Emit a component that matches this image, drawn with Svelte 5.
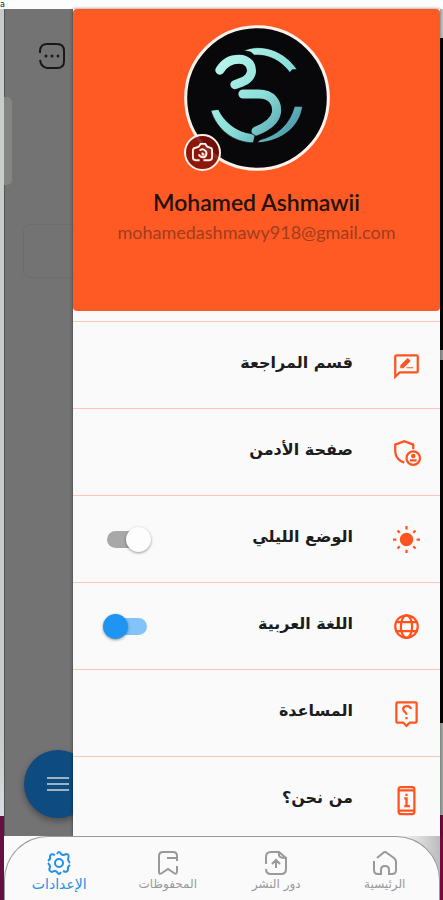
<script lang="ts">
	let nightMode = $state(false);
	let arabic = $state(true);
	let activeTab = $state('settings');

	const tabs = [
		{ id: 'home', label: 'الرئيسية' },
		{ id: 'publish', label: 'دور النشر' },
		{ id: 'saved', label: 'المحفوظات' },
		{ id: 'settings', label: 'الإعدادات' }
	];
</script>

<div class="desktop" dir="rtl">
	<div class="topbar"><span aria-hidden="true">a</span></div>
	<div class="phone">
		<div class="stage">
			<aside class="drawer">
				<header class="profile">
					<div class="avatar">
						<svg class="avatar-art" viewBox="40 46 436 436" aria-hidden="true">
							<defs>
								<linearGradient id="teal" gradientUnits="userSpaceOnUse" x1="150" y1="160" x2="390" y2="370">
									<stop offset="0" stop-color="#b4f4ea" />
									<stop offset="0.5" stop-color="#8bded8" />
									<stop offset="1" stop-color="#438fa3" />
								</linearGradient>
							</defs>
							<circle cx="258" cy="264" r="213" fill="#08080b" stroke="#fff1ec" stroke-width="9" />
							<g fill="none" stroke="url(#teal)" stroke-width="27">
								<path stroke-linecap="round" d="M147 181C160 159 180 148 204 148C231 148 244 167 241 188C236 211 212 216 192 224" />
								<path stroke-linecap="round" d="M216 252H263C302 252 320 278 316 308C311 336 282 352 255 363" />
							</g>
							<g fill="url(#teal)">
								<path d="M218 122C272 101 336 119 378 179L363 180L356 188C328 151 292 134 250 136L239 127Z" />
								<path d="M120 301L143 298C160 335 195 364 243 371L252 376L247 398C188 397 138 359 120 301Z" />
								<path d="M370 289H394C388 344 338 394 258 398L267 389C318 376 356 343 370 289Z" />
							</g>
						</svg>
						<button class="camera" aria-label="Change photo">
							<svg viewBox="0 0 24 24" aria-hidden="true">
								<path d="M9 20H5C3 20 2 19 2 17V10C2 8 3 7 5 7L8 6L10 3H15L17 6L20 7C21 7 22 8 22 10V17C22 19 21 20 19 20H13M9 10C12 7 17 10 16 14C15 18 10 18 8 14M12 12L12 14H14" />
							</svg>
						</button>
					</div>
					<h1>Mohamed Ashmawii</h1>
					<p>mohamedashmawy918@gmail.com</p>
				</header>

				<div class="menu">
					<button class="row">
						<svg viewBox="0 0 24 24" aria-hidden="true">
							<path d="M2 22V4Q2 3 3 3H21Q22 3 22 4V17Q22 18 21 18H6Z" />
							<path d="M7 14V12L13 6L15 8L9 14ZM12 14H18" fill="currentColor" stroke-width="1" />
						</svg>
						<span>قسم المراجعة</span>
					</button>
					<button class="row">
						<svg viewBox="0 0 24 24" aria-hidden="true">
							<path d="M18 9V5L10 2L2 5V11C2 16 6 20 10 21" />
							<circle cx="18" cy="17" r="6" />
							<circle cx="18" cy="15" r="2" fill="currentColor" stroke="none" />
							<path d="M15 19H21" stroke-width="2" />
						</svg>
						<span>صفحة الأدمن</span>
					</button>
					<label class="row">
						<svg viewBox="0 0 24 24" aria-hidden="true">
							<circle cx="12" cy="12" r="5" fill="currentColor" />
							<path d="M12 0V3M12 21V24M0 12H3M21 12H24M4 4L6 6M18 18L20 20M4 20L6 18M18 6L20 4" />
						</svg>
						<span>الوضع الليلي</span>
						<input type="checkbox" role="switch" bind:checked={nightMode} />
					</label>
					<label class="row">
						<svg viewBox="0 0 24 24" aria-hidden="true">
							<circle cx="12" cy="12" r="10" />
							<ellipse cx="12" cy="12" rx="5" ry="10" />
							<path d="M2 8H22M2 16H22" />
						</svg>
						<span>اللغة العربية</span>
						<input type="checkbox" role="switch" bind:checked={arabic} />
					</label>
					<button class="row">
						<svg viewBox="0 0 24 24" aria-hidden="true">
							<path d="M4 2H20Q21 2 21 3V19Q21 20 20 20H15L12 23L9 20H4Q3 20 3 19V3Q3 2 4 2Z" />
							<path d="M16 8C15 4 9 5 9 8C9 11 12 10 12 13M12 15V17" />
						</svg>
						<span>المساعدة</span>
					</button>
					<button class="row">
						<svg viewBox="0 0 24 24" aria-hidden="true">
							<rect x="5" y="0" width="14" height="24" rx="2" />
							<path d="M5 3H19M5 21H19M10 10H12V17M10 17H15" />
							<path d="M11 7H13" />
						</svg>
						<span>من نحن؟</span>
					</button>
				</div>
			</aside>

			<div class="behind">
				<button class="more" aria-label="More">
					<svg viewBox="0 0 26 26" aria-hidden="true">
						<path d="M1 10V7Q2 1 8 1H18Q25 1 25 8V18Q25 25 18 25H8Q2 24 1 17" />
						<path d="M7 13H7M13 13H13M19 13H19" stroke-width="3" stroke-linecap="round" />
					</svg>
				</button>
				<div class="side-tab"></div>
				<div class="ghost-card"></div>
				<button class="fab" aria-label="Menu">
					<svg viewBox="0 0 24 18" aria-hidden="true"><path d="M1 3H23M1 9H23M1 15H23" /></svg>
				</button>
			</div>
		</div>

		<div class="nav-wrap">
			<nav>
				{#each tabs as tab (tab.id)}
					<button class="tab" class:active={activeTab === tab.id} onclick={() => (activeTab = tab.id)}>
						<svg viewBox="0 0 26 26" aria-hidden="true">
							{#if tab.id === 'home'}
								<path d="M5 8L11 3Q13 1 15 3L22 8Q24 10 24 12V20Q24 24 20 24H17V20Q17 16 13 16Q9 16 9 20V24H6Q2 24 2 20V11" />
							{:else if tab.id === 'publish'}
								<path d="M3 14V7Q3 2 8 2H16L23 8V19Q23 24 18 24H8Q3 24 3 19M16 2V5Q16 8 23 8M13 18V11M9 14L13 10L17 14" />
							{:else if tab.id === 'saved'}
								<path d="M22 11V6Q22 2 18 2H8Q4 2 4 6V22Q4 25 7 23L13 19L19 23Q22 25 22 21V16M12 8H22" />
							{:else}
								<circle cx="13" cy="13" r="4" />
								<path d="M11 4Q13 0 15 4Q17 6 20 4Q24 4 22 9Q22 11 24 13M24 15Q21 17 22 20Q21 23 17 21M15 22Q13 26 11 22Q9 20 6 22Q2 21 4 17Q4 15 2 13M2 11Q5 9 4 6Q5 3 9 5" />
							{/if}
						</svg>
						<span>{tab.label}</span>
					</button>
				{/each}
			</nav>
		</div>
	</div>
</div>

<style>
	:global(body) {
		background: #fdfdfd;
	}

	.desktop {
		display: flex;
		flex-direction: column;
		min-height: 100vh;
		font-family: 'DejaVu Sans', sans-serif;
		background:
			linear-gradient(#bfc3c1 38px, #050505 38px, #050505 350px, #999 350px, #999 360px, #050505 360px, #050505 723px, #a3aaa5 723px, #a3aaa5 815px, #700b3e 815px) right / 3px 100% no-repeat,
			linear-gradient(#c8cdca 740px, #d9dce2 816px, #670f42 816px) left / 4px 100% no-repeat,
			#fdfdfd;
	}

	.topbar {
		height: 9px;
		background: #fdfdfd;
		direction: ltr;
		font-size: 8px;
		line-height: 9px;
		color: #222;
	}

	.topbar span {
		display: block;
	}

	.phone {
		flex: 1;
		display: flex;
		flex-direction: column;
		margin: 0 3px 0 4px;
		background: #fafafa;
	}

	.stage {
		flex: 1;
		display: flex;
	}

	.drawer {
		flex: 1;
		background: #fafafa;
		z-index: 1;
		box-shadow: 0 0 3px rgba(0, 0, 0, 0.5);
	}

	.profile {
		display: flex;
		flex-direction: column;
		align-items: center;
		box-sizing: border-box;
		height: 302px;
		padding-top: 16px;
		background: #ff5a24;
		border-radius: 4px;
		font-family: Lato, sans-serif;
		direction: ltr;
	}

	.avatar {
		position: relative;
		width: 146px;
		height: 146px;
	}

	.avatar-art {
		display: block;
		width: 100%;
		height: 100%;
	}

	.camera {
		position: absolute;
		left: 0;
		bottom: 0;
		display: flex;
		align-items: center;
		justify-content: center;
		width: 37px;
		height: 37px;
		padding: 0;
		border: 2px solid #fff1ec;
		border-radius: 50%;
		background: rgba(125, 14, 8, 0.88);
		color: #fff1ec;
	}

	.camera svg {
		width: 23px;
		height: 23px;
	}

	h1 {
		margin: 16px 0 0;
		font-size: 23px;
		line-height: 30px;
		font-weight: 600;
		color: #25120c;
	}

	.profile p {
		margin: 2px 0 0;
		font-size: 18px;
		line-height: 26px;
		color: #9f3d1e;
	}

	.menu {
		padding-top: 10px;
	}

	.row {
		display: flex;
		align-items: center;
		box-sizing: border-box;
		width: 100%;
		height: 87px;
		padding: 0 20px 0 30px;
		border: 0;
		border-top: 1px solid #ffc6b4;
		background: none;
		color: #ff5420;
		font-family: inherit;
		text-align: start;
		cursor: pointer;
	}

	.row:last-child {
		height: 79px;
		padding-top: 8px;
	}

	.row span {
		flex: 1;
		margin-right: 40px;
		padding-bottom: 4px;
		font-size: 16px;
		line-height: 26px;
		font-weight: 700;
		color: #1c1c1c;
	}

	svg {
		fill: none;
		stroke: currentColor;
		stroke-width: 2;
		flex: none;
	}

	.row svg {
		width: 27px;
		height: 27px;
		overflow: visible;
	}

	.row input {
		appearance: none;
		display: flex;
		align-items: center;
		width: 40px;
		height: 17px;
		margin: 0 0 0 4px;
		border-radius: 9px;
		background: #a8a8a8;
		cursor: pointer;
	}

	.row input::before {
		content: '';
		flex: none;
		width: 25px;
		height: 25px;
		margin-right: -4px;
		border-radius: 50%;
		background: #fdfdfd;
		box-shadow: 0 1px 3px rgba(0, 0, 0, 0.4);
	}

	.row input:checked {
		background: #82c3fa;
	}

	.row input:checked::before {
		margin-right: 19px;
		background: #2094f3;
	}

	.behind {
		position: relative;
		display: flex;
		flex-direction: column;
		align-items: flex-start;
		flex: 0 0 69px;
		direction: ltr;
		overflow: hidden;
		background: #737373;
		box-shadow: inset 1px 0 #555;
	}

	.more {
		margin: 34px 0 0 35px;
		padding: 0;
		border: 0;
		background: none;
		color: #191919;
	}

	.more svg {
		display: block;
		width: 26px;
		height: 26px;
	}

	.side-tab {
		width: 8px;
		height: 88px;
		margin-top: 28px;
		border-radius: 0 5px 5px 0;
		background: #858582;
	}

	.ghost-card {
		width: 80px;
		height: 52px;
		margin: 39px 0 0 19px;
		border: 1px solid #6d6d6d;
		border-radius: 6px;
	}

	.fab {
		display: flex;
		align-items: center;
		justify-content: center;
		flex: none;
		width: 68px;
		height: 68px;
		margin: auto 0 18px 20px;
		padding: 0;
		border: 0;
		border-radius: 50%;
		background: #0d4b80;
		color: #9fb2c0;
		box-shadow: 0 3px 6px rgba(0, 0, 0, 0.35);
	}

	.fab svg {
		width: 24px;
		height: 18px;
	}

	.nav-wrap {
		position: relative;
		z-index: 2;
		background: linear-gradient(to left, #bcbcbc, #fafafa 40px);
	}

	nav {
		display: flex;
		box-sizing: border-box;
		height: 64px;
		border: 1px solid #999;
		border-bottom: 0;
		border-radius: 44px 44px 0 0;
		background: #fafafa;
	}

	.tab {
		flex: 1;
		display: flex;
		flex-direction: column;
		align-items: center;
		padding: 13px 0 0;
		border: 0;
		background: none;
		font-family: inherit;
		font-size: 12px;
		line-height: 16px;
		color: #999;
		cursor: pointer;
	}

	.tab svg {
		width: 26px;
		height: 26px;
	}

	.tab span {
		white-space: nowrap;
	}

	.tab.active {
		color: #2591e5;
	}

	.tab.active span {
		font-size: 14px;
	}
</style>
